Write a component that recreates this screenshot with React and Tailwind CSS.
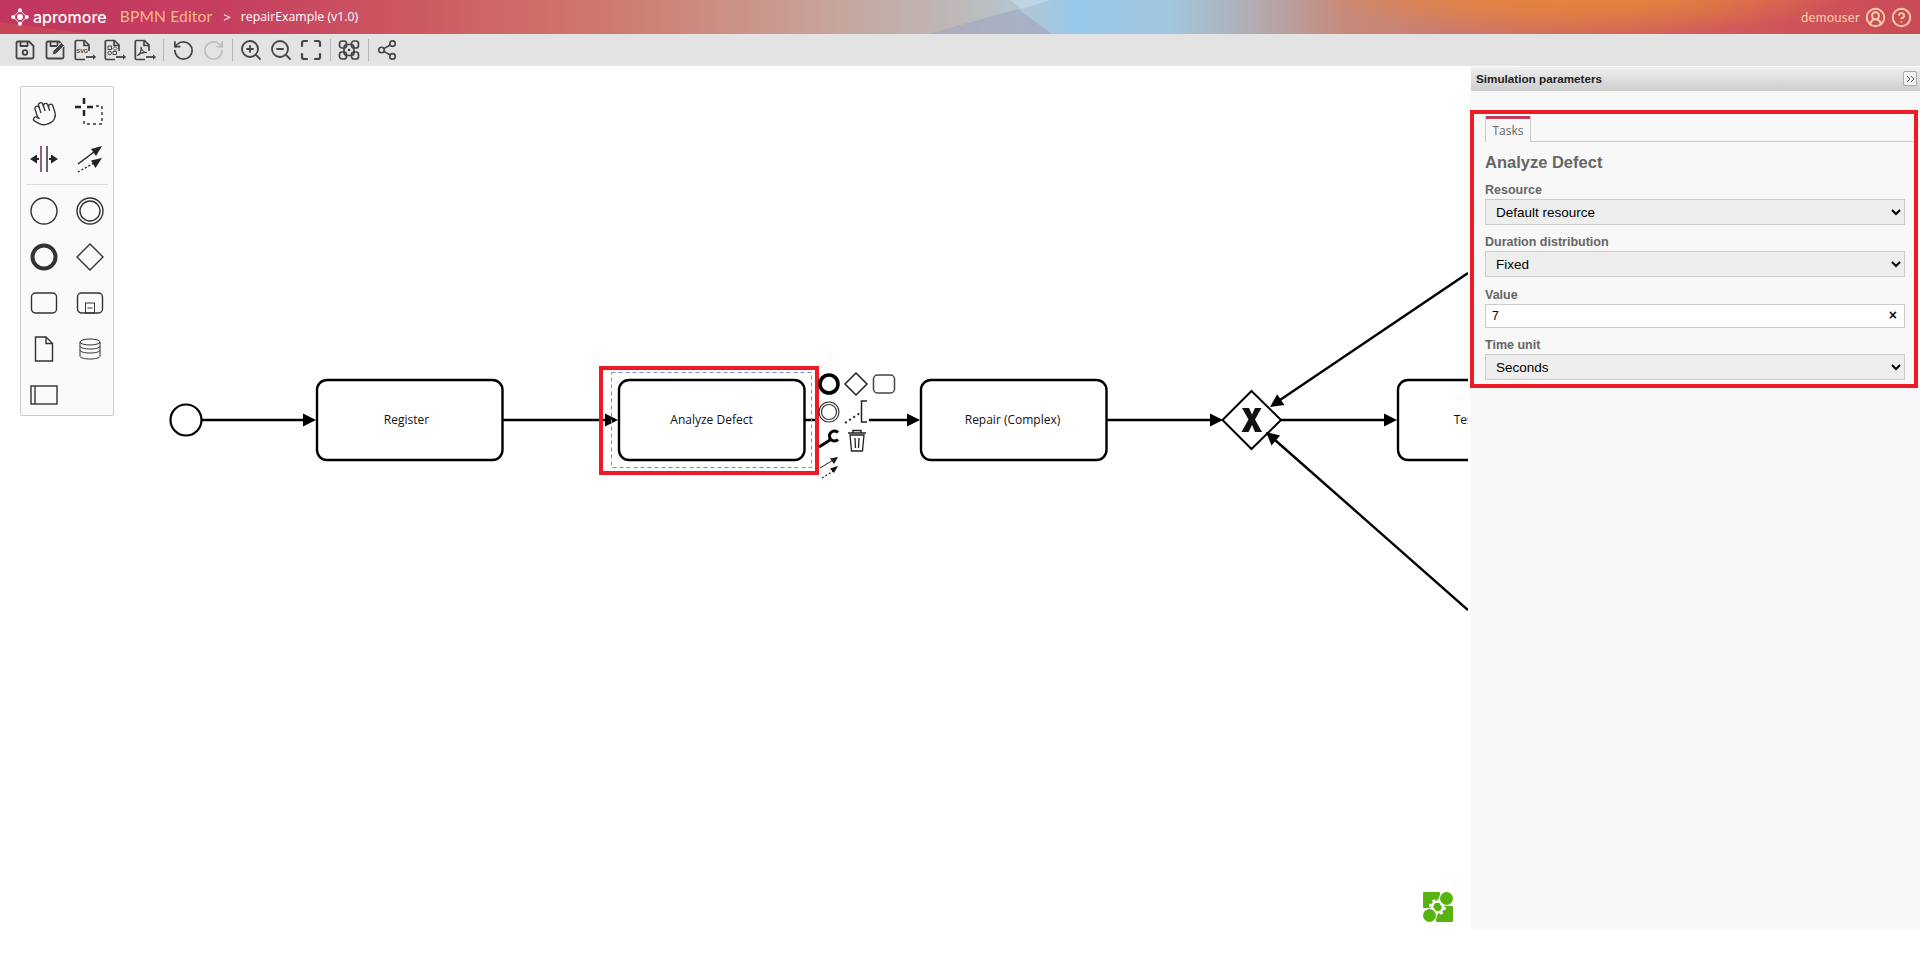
import { CircleHelp, CircleUserRound, Hand, Maximize, RotateCcw, RotateCw, Share2, ZoomIn, ZoomOut } from "lucide-react";

// toolbar icons that lucide has no match for
function Floppy({ pencil }) {
  return (
    <svg width="22" height="22" viewBox="0 0 22 22" fill="none" stroke="#444" strokeWidth="1.8" strokeLinejoin="round">
      <path d="M4 2.500h11l4.500 4.500v11a1.500 1.500 0 0 1-1.500 1.500H4A1.500 1.500 0 0 1 2.500 18V4A1.500 1.500 0 0 1 4 2.500z" />
      <path d="M6.500 2.500v4.500h7V2.500" />
      {pencil ? (
        <path d="M8 16l1-4 8.500-8.500 3 3L12 15z" fill="#444" stroke="#e3e3e3" strokeWidth="1" />
      ) : (
        <circle cx="11" cy="13.500" r="2.300" />
      )}
    </svg>
  );
}

function DocExport({ kind }) {
  return (
    <svg width="24" height="22" viewBox="0 0 24 22" fill="none" stroke="#444" strokeWidth="1.700" strokeLinejoin="round">
      <path d="M16 12V6l-4.500-4.500H3.500A1.200 1.200 0 0 0 2.300 2.700v16.600a1.200 1.200 0 0 0 1.200 1.200H12" />
      <path d="M11 1.500V6.500h5" />
      <path d="M13 18h8" strokeWidth="1.800" />
      <path d="M20 15.200l3.200 2.800-3.200 2.800z" fill="#444" stroke="none" />
      {kind === "svg" && (
        <text x="3.500" y="13.500" fontSize="5.500" fontWeight="700" fill="#444" stroke="none" fontFamily="'Liberation Sans', sans-serif">SVG</text>
      )}
      {kind === "bpmn" && (
        <g strokeWidth="1">
          <rect x="5" y="7" width="3.500" height="3.500" />
          <circle cx="6.700" cy="14" r="1.800" />
          <path d="M12 5.500l2 2-2 2-2-2z" transform="translate(0 2)" />
          <rect x="10" y="12.500" width="3.500" height="3" />
        </g>
      )}
      {kind === "pdf" && (
        <path d="M4.500 16.500c2.500-1.500 4-5 3.500-8.500 .5 3 2.500 5 5.500 5.500-3-.2-6.500 .8-9 3z" strokeWidth="1.200" />
      )}
    </svg>
  );
}

function LayoutIcon() {
  return (
    <svg width="24" height="22" viewBox="0 0 24 22" fill="none" stroke="#444" strokeWidth="1.700">
      <rect x="2.500" y="2" width="7" height="7" rx="2.500" />
      <rect x="14.500" y="2" width="7" height="7" rx="2.500" />
      <rect x="2.500" y="13" width="7" height="7" rx="2.500" />
      <rect x="14.500" y="13" width="7" height="7" rx="2.500" />
      <rect x="7" y="5.500" width="10" height="11" rx="3" />
      <circle cx="12" cy="11" r="1.300" fill="#444" stroke="none" />
    </svg>
  );
}

function Sep({ className }) {
  return <div className={`w-px h-[22px] bg-[#b5b5b5] ${className}`} />;
}

function Btn({ children }) {
  return <div className="w-[30px] h-[32px] flex items-center justify-center">{children}</div>;
}

function Toolbar() {
  return (
    <div className="h-[32px] bg-[#e3e3e3] flex items-center pl-[10px]">
      <Btn><Floppy /></Btn>
      <Btn><Floppy pencil /></Btn>
      <Btn><DocExport kind="svg" /></Btn>
      <Btn><DocExport kind="bpmn" /></Btn>
      <Btn><DocExport kind="pdf" /></Btn>
      <Sep className="ml-[3px] mr-[4px]" />
      <Btn><RotateCcw size={23} color="#444" strokeWidth={1.8} /></Btn>
      <Btn><RotateCw size={23} color="#bdbdbd" strokeWidth={1.8} /></Btn>
      <Sep className="ml-[4px] mr-[3px]" />
      <Btn><ZoomIn size={24} color="#444" strokeWidth={1.8} /></Btn>
      <Btn><ZoomOut size={24} color="#444" strokeWidth={1.8} /></Btn>
      <Btn><Maximize size={24} color="#444" strokeWidth={2.2} /></Btn>
      <Sep className="ml-[4px] mr-[3px]" />
      <Btn><LayoutIcon /></Btn>
      <Sep className="ml-[4px] mr-[3px]" />
      <Btn><Share2 size={22} color="#444" strokeWidth={1.8} /></Btn>
    </div>
  );
}

function Logo() {
  return (
    <svg width="18" height="18" viewBox="0 0 20 20" fill="#fff" stroke="none">
      <circle cx="10" cy="10" r="3.200" />
      <circle cx="10" cy="2.500" r="2.200" />
      <circle cx="10" cy="17.500" r="2.200" />
      <circle cx="2.500" cy="10" r="2.200" />
      <circle cx="17.500" cy="10" r="2.200" />
      <path d="M10 2.500L17.500 10 10 17.500 2.500 10z" fill="none" stroke="#fff" strokeWidth="1" />
    </svg>
  );
}

function Header() {
  return (
    <div className="relative h-[34px] overflow-hidden flex items-center justify-between pl-[11px] pr-[8px] bg-[radial-gradient(ellipse_270px_42px_at_1580px_-6px,#e8853a_0%,rgba(232,133,58,0.7)_45%,rgba(232,133,58,0)_100%),linear-gradient(90deg,#c1365f_0%,#c63f5f_12%,#cd5a62_22%,#cf7a6e_32%,#c8a096_42%,#bdb9b8_50%,#b4c6d0_53%,#97c9ea_56%,#a2c6de_61%,#b1aeb5_65%,#c68a7c_70%,#d26a58_82%,#d0565a_92%,#ca4a58_100%)]">
      <svg className="absolute inset-0" width="1920" height="34">
        <path d="M928 34L1018 9 1052 34z" fill="#a5a9c0" opacity="0.75" />
        <path d="M1010 0L1050 0 1022 9z" fill="#c4dcea" opacity="0.7" />
        <path d="M0 22L90 34H0z" fill="#d9634f" opacity="0.35" />
      </svg>
      <div className="relative flex items-center">
        <Logo />
        <span className="ml-[4px] text-[16px] leading-none font-medium text-white font-['Inter',sans-serif]">apromore</span>
        <span className="ml-[13px] text-[15.500px] leading-none text-[#f9b98a] font-['Lato',sans-serif] tracking-[0.2px]">BPMN Editor</span>
        <span className="ml-[11px] text-[13px] leading-none text-white font-['Open_Sans',sans-serif]">&gt;</span>
        <span className="ml-[10px] text-[12.300px] leading-none font-medium text-white font-['Open_Sans',sans-serif]">repairExample (v1.0)</span>
      </div>
      <div className="relative flex items-center text-[#f8cfa6]">
        <span className="text-[13px] leading-none font-['Lato',sans-serif] tracking-[0.3px]">demouser</span>
        <CircleUserRound className="ml-[5px]" size={21} strokeWidth={2.2} />
        <CircleHelp className="ml-[5px]" size={21} strokeWidth={2.2} />
      </div>
    </div>
  );
}

function Arrow({ x, y, angle = 0 }) {
  // arrow head, tip at x,y
  return <path d="M0 0L-13-6.500V6.500z" fill="#000" transform={`translate(${x} ${y}) rotate(${angle})`} />;
}

function Task({ x, label, cx }) {
  return (
    <g>
      <rect x={x} y="380" width="185.500" height="80" rx="10" fill="#fff" stroke="#000" strokeWidth="2.400" />
      <text x={cx} y="423.500" textAnchor="middle" fontSize="12" fill="#111" fontFamily="'Open Sans', sans-serif">{label}</text>
    </g>
  );
}

function Gears() {
  return (
    <g transform="translate(1423 892)">
      <rect x="0" y="0" width="17" height="16" rx="1" fill="#57b312" />
      <rect x="13" y="14" width="17" height="16" rx="1" fill="#57b312" />
      {/* white gear between the two blocks */}
      <circle cx="14.500" cy="15" r="5.500" fill="none" stroke="#fff" strokeWidth="2.500" />
      <circle cx="14.500" cy="15" r="7.500" fill="none" stroke="#fff" strokeWidth="2" strokeDasharray="3 2.900" />
      <circle cx="14.500" cy="15" r="3.500" fill="#57b312" />
      <circle cx="23.500" cy="6.500" r="7.500" fill="#fff" />
      <circle cx="23.500" cy="6.500" r="6.500" fill="#57b312" />
      <circle cx="6.500" cy="23.500" r="7.500" fill="#fff" />
      <circle cx="6.500" cy="23.500" r="6.500" fill="#57b312" />
    </g>
  );
}

function Diagram() {
  return (
    <svg className="block" width="1468" height="904" viewBox="0 66 1468 904" strokeLinecap="butt">
      <circle cx="186" cy="420" r="15.500" fill="#fff" stroke="#000" strokeWidth="2.200" />
      <path d="M201 420H304M503 420H606M805 420H908M1107 420H1211M1281 420H1385" stroke="#000" strokeWidth="2.400" fill="none" />
      <Arrow x={316} y={420} />
      <Arrow x={618} y={420} />
      <Arrow x={920} y={420} />
      <Arrow x={1223} y={420} />
      <Arrow x={1397} y={420} />
      <Task x={317} cx={406.500} label="Register" />
      <Task x={619} cx={711.500} label="Analyze Defect" />
      <Task x={921} cx={1012.500} label="Repair (Complex)" />
      <Task x={1398} cx={1485} label="Test Repair" />

      <path d="M1251.500 391L1281 420 1251.500 449 1222.500 420z" fill="#fff" stroke="#000" strokeWidth="2" />
      <path d="M1242 408H1249L1252 414.500 1255 408H1261.500L1255 419.500 1262 432H1255L1252 425 1248.500 432H1241.500L1248.500 419.500z" fill="#111" />

      <path d="M1468 273L1280 400M1468 610L1275 440" stroke="#000" strokeWidth="2.400" fill="none" />
      <Arrow x={1270} y={407} angle={146} />
      <Arrow x={1266} y={432} angle={221} />

      {/* selected task frame */}
      <rect x="611.500" y="372.500" width="200" height="95" fill="none" stroke="#8484f0" strokeWidth="1" strokeDasharray="4 3" />
      <rect x="601" y="368" width="216" height="105" fill="none" stroke="#ed1c24" strokeWidth="4" />

      {/* context pad */}
      <rect x="819" y="412" width="50" height="16" fill="#fff" />
      <circle cx="829" cy="384" r="9" fill="#fff" stroke="#000" strokeWidth="3.600" />
      <path d="M856 373l11 11-11 11-11-11z" fill="#fff" stroke="#222" strokeWidth="1.500" />
      <rect x="873.500" y="375" width="21" height="18" rx="4" fill="#fff" stroke="#444" strokeWidth="1.500" />
      <circle cx="829" cy="412" r="10" fill="#fff" stroke="#333" strokeWidth="1.200" />
      <circle cx="829" cy="412" r="7.500" fill="none" stroke="#333" strokeWidth="1.200" />
      <path d="M845 423L860 413" stroke="#222" strokeWidth="2" strokeDasharray="2 3" fill="none" />
      <path d="M867 401H861.500V422H867" stroke="#222" strokeWidth="1.500" fill="none" />
      <path d="M819 447L830 440" stroke="#000" strokeWidth="3" />
      <path d="M838 432.500a5 5 0 1 0 0 7" stroke="#000" strokeWidth="3" fill="none" />
      <path d="M848 433H866M853 433V430.500H861V433" stroke="#222" strokeWidth="1.500" fill="none" />
      <path d="M850 435L851.500 451H862.500L864 435zM855 438L855.500 448M859 438L858.500 448" fill="none" stroke="#222" strokeWidth="1.300" />
      <path d="M820 468L835 459" stroke="#222" strokeWidth="1" />
      <path d="M838 457L830 458.500 834 464z" fill="#111" />
      <path d="M822 478L835 470" stroke="#222" strokeWidth="1.200" strokeDasharray="2 2" />
      <path d="M838 466L830 468.500 834 473z" fill="#111" />

      <Gears />
    </svg>
  );
}

function PaletteCell({ children }) {
  return <div className="h-[46px] flex items-center justify-center">{children}</div>;
}

function Palette() {
  const ink = { fill: "none", stroke: "#333", strokeWidth: 1.4 };
  return (
    <div className="absolute left-[20px] top-[20px] w-[94px] h-[330px] bg-[#fafafa] border border-[#ccc] rounded-[2px] pt-[3px]">
      <div className="grid grid-cols-2">
        <PaletteCell><Hand className="rotate-[-18deg] -ml-[2px]" size={27} color="#333" strokeWidth={1.200} /></PaletteCell>
        <PaletteCell>
          <svg width="30" height="30" viewBox="0 0 30 30">
            <path d="M0 9H6M9 0V6M12 9H18M9 12V18" stroke="#222" strokeWidth="2.500" />
            <path d="M21 8H27V26H9V20" {...ink} strokeDasharray="3 3" />
          </svg>
        </PaletteCell>
        <PaletteCell>
          <svg width="28" height="28" viewBox="0 0 28 28">
            <path d="M11 1V27" stroke="#6d2b5a" strokeWidth="1.500" />
            <path d="M17 1V27" stroke="#333" strokeWidth="1.500" />
            <path d="M0 14L7 9.500V18.500zM28 14L21 9.500V18.500z" fill="#222" />
            <path d="M5 14H9M19 14H23" stroke="#222" strokeWidth="2" />
          </svg>
        </PaletteCell>
        <PaletteCell>
          <svg width="28" height="28" viewBox="0 0 28 28">
            <path d="M2 19L18 7" stroke="#222" strokeWidth="1.500" />
            <path d="M26 1L15 4 20 11z" fill="#222" />
            <path d="M2 27L18 18" stroke="#222" strokeWidth="1.300" strokeDasharray="2 2" />
            <path d="M26 13L15 15.500 19.500 23z" fill="#222" />
          </svg>
        </PaletteCell>
      </div>
      <div className="h-px bg-[#ddd] mx-[5px] mt-[2px] mb-[3px]" />
      <div className="grid grid-cols-2">
        <PaletteCell><svg width="28" height="28"><circle cx="14" cy="14" r="13" {...ink} /></svg></PaletteCell>
        <PaletteCell>
          <svg width="28" height="28"><circle cx="14" cy="14" r="13" {...ink} /><circle cx="14" cy="14" r="10" {...ink} /></svg>
        </PaletteCell>
        <PaletteCell><svg width="28" height="28"><circle cx="14" cy="14" r="11.500" fill="none" stroke="#333" strokeWidth="4" /></svg></PaletteCell>
        <PaletteCell><svg width="28" height="28"><path d="M14 1L27 14 14 27 1 14z" {...ink} /></svg></PaletteCell>
        <PaletteCell><svg width="28" height="24"><rect x="1.500" y="2" width="25" height="20" rx="4" {...ink} /></svg></PaletteCell>
        <PaletteCell>
          <svg width="28" height="24">
            <rect x="1.500" y="2" width="25" height="20" rx="4" {...ink} />
            <rect x="9.500" y="12" width="9" height="10" {...ink} strokeWidth="1" />
            <path d="M11.500 17H16.500" stroke="#333" />
          </svg>
        </PaletteCell>
        <PaletteCell>
          <svg width="20" height="26">
            <path d="M1.500 1H12L18.500 7.500V25H1.500z" {...ink} />
            <path d="M12 1V7.500H18.500" {...ink} />
          </svg>
        </PaletteCell>
        <PaletteCell>
          <svg width="22" height="22">
            <path d="M1 4V18C1 20 6 21 11 21S21 20 21 18V4" {...ink} strokeWidth="1" />
            <ellipse cx="11" cy="4" rx="10" ry="3" {...ink} strokeWidth="1" />
            <path d="M1 8C1 10 6 11 11 11S21 10 21 8M1 12C1 14 6 15 11 15S21 14 21 12" {...ink} strokeWidth="1" />
          </svg>
        </PaletteCell>
        <PaletteCell>
          <svg width="28" height="20">
            <rect x="1" y="1" width="26" height="18" {...ink} />
            <path d="M5 1V19" {...ink} />
          </svg>
        </PaletteCell>
      </div>
    </div>
  );
}

function FieldLabel({ className, children }) {
  return <div className={`h-[17px] leading-[16px] text-[12.500px] font-bold text-[#666] ${className}`}>{children}</div>;
}

function Select({ value }) {
  return (
    <select
      value={value}
      onChange={() => {}}
      className="block w-full h-[26px] bg-[#eee] border border-[#ccc] pl-[6px] text-[13.500px] text-black font-['Liberation_Sans',Arial,sans-serif]"
    >
      <option>{value}</option>
    </select>
  );
}

function SimPanel() {
  return (
    <div className="w-[449px] h-[863px] ml-[3px] bg-[#f8f8f8] font-['Liberation_Sans',Arial,sans-serif]">
      <div className="relative h-[25px] border-t border-white bg-gradient-to-b from-[#f0f0f0] to-[#cdcdcd] flex items-center pl-[5px]">
        <span className="text-[11.700px] font-bold text-[#222]">Simulation parameters</span>
        <div className="absolute right-[3px] top-[4px] w-[14px] h-[15px] bg-[#f4f4f4] border border-[#aaa] rounded-[2px] flex items-center justify-center">
          <svg width="9" height="8" viewBox="0 0 9 8" fill="none" stroke="#555" strokeWidth="1"><path d="M1 1l3 3-3 3M5 1l3 3-3 3" /></svg>
        </div>
      </div>
      <div className="-ml-px mr-[2px] mt-[19px] h-[278px] border-4 border-[#ed1c24] pt-[2px]">
        <div className="border-b border-[#ccc] ml-[11px] h-[26px]">
          <div className="w-[46px] h-[26px] bg-[#f8f8f8] border-x border-[#ccc] border-t-[3px] border-t-[#c0395a] rounded-t-[2px] flex items-center justify-center text-[12px] text-[#666] font-['Open_Sans',sans-serif]">Tasks</div>
        </div>
        <div className="pl-[11px] pr-[9px]">
          <div className="h-[40px] flex items-center pt-[1px] text-[16.500px] font-bold text-[#666]">Analyze Defect</div>
          <FieldLabel>Resource</FieldLabel>
          <Select value="Default resource" />
          <FieldLabel className="mt-[9px]">Duration distribution</FieldLabel>
          <Select value="Fixed" />
          <FieldLabel className="mt-[10px]">Value</FieldLabel>
          <div className="relative">
            <input readOnly value="7" className="block w-full h-[24px] bg-white border border-[#ccc] pl-[6px] text-[12px] text-black outline-none" />
            <span className="absolute right-[8px] top-[3px] text-[14px] leading-[16px] font-bold text-[#111]">×</span>
          </div>
          <FieldLabel className="mt-[9px]">Time unit</FieldLabel>
          <Select value="Seconds" />
        </div>
      </div>
    </div>
  );
}

export default function App() {
  return (
    <div className="w-[1920px] h-[970px] bg-white overflow-hidden">
      <Header />
      <Toolbar />
      <div className="flex">
        <div className="relative w-[1468px] h-[904px] overflow-hidden">
          <Diagram />
          <Palette />
        </div>
        <SimPanel />
      </div>
    </div>
  );
}
